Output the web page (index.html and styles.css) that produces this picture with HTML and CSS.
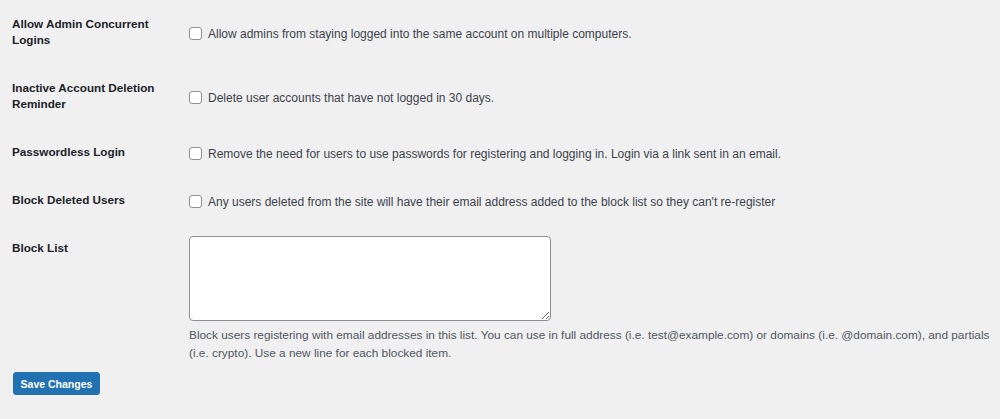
FILE: index.html
```html
<!DOCTYPE html>
<html lang="en">
<head>
<meta charset="utf-8">
<title>Settings</title>
<link rel="stylesheet" href="styles.css">
</head>
<body>
<form class="wrap">
  <table class="form-table">
    <tr>
      <th>Allow Admin Concurrent Logins</th>
      <td><label class="check"><input type="checkbox"> Allow admins from staying logged into the same account on multiple computers.</label></td>
    </tr>
    <tr>
      <th>Inactive Account Deletion Reminder</th>
      <td><label class="check"><input type="checkbox"> Delete user accounts that have not logged in 30 days.</label></td>
    </tr>
    <tr>
      <th>Passwordless Login</th>
      <td><label class="check"><input type="checkbox"> Remove the need for users to use passwords for registering and logging in. Login via a link sent in an email.</label></td>
    </tr>
    <tr>
      <th>Block Deleted Users</th>
      <td><label class="check"><input type="checkbox"> Any users deleted from the site will have their email address added to the block list so they can't re-register</label></td>
    </tr>
    <tr>
      <th>Block List</th>
      <td class="top">
        <textarea class="blocklist"></textarea>
        <p class="description">Block users registering with email addresses in this list. You can use in full address (i.e. test@example.com) or domains (i.e. @domain.com), and partials (i.e. crypto). Use a new line for each blocked item.</p>
      </td>
    </tr>
  </table>
  <p class="submit"><button type="button" class="button-primary">Save Changes</button></p>
</form>
</body>
</html>
```
FILE: styles.css
```css
html, body {
  margin: 0;
  padding: 0;
  background: #f0f0f1;
}
body {
  font-family: "Liberation Sans", Arial, sans-serif;
  font-size: 12px;
  color: #3c434a;
}
.wrap {
  padding: 0 0 0 12px;
}
.form-table {
  border-collapse: collapse;
  width: 100%;
}
.form-table th {
  width: 167px;
  padding: 16px 10px 16px 0;
  text-align: left;
  vertical-align: top;
  font-weight: bold;
  font-size: 11.7px;
  line-height: 16px;
  color: #1d2327;
}
.form-table td {
  padding: 13px 0 10px 0;
  vertical-align: middle;
  line-height: 16px;
}
.form-table td.top {
  vertical-align: top;
  padding: 12px 0 10px 0;
}
.check {
  display: flex;
  align-items: center;
  gap: 6px;
}
.check input {
  appearance: none;
  -webkit-appearance: none;
  width: 13px;
  height: 13px;
  margin: 0;
  border: 1px solid #8c8f94;
  border-radius: 3px;
  background: #fff;
  flex: none;
}
.blocklist {
  display: block;
  width: 362px;
  height: 85px;
  box-sizing: border-box;
  margin: 0;
  border: 1px solid #8c8f94;
  border-radius: 4px;
  background: #fff;
  resize: vertical;
}
.description {
  margin: 5px 0 0;
  font-size: 11.83px;
  line-height: 18px;
  color: #50575e;
  max-width: 810px;
}
.submit {
  margin: 0;
  padding: 0;
}
.button-primary {
  font-family: "Liberation Sans", Arial, sans-serif;
  font-size: 10.5px;
  font-weight: bold;
  color: #fff;
  background: #2271b1;
  border: 1px solid #2271b1;
  border-radius: 3px;
  width: 87px;
  height: 23px;
  padding: 0;
  margin-left: 1px;
}
```
